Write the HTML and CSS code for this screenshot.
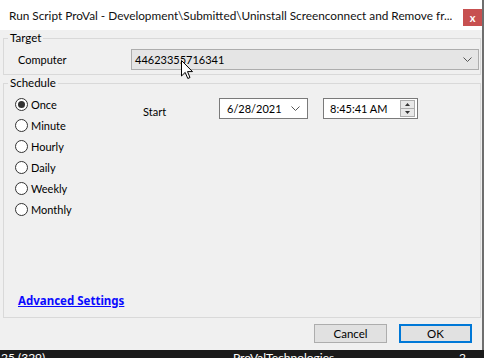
FILE: index.html
```html
<!DOCTYPE html>
<html lang="en">
<head>
    <meta charset="UTF-8">
    <title>Run Script</title>
    <link rel="stylesheet" href="styles.css">
</head>
<body>
    <div class="window">
        <div class="titlebar">
            <span class="title">Run Script ProVal - Development\Submitted\Uninstall Screenconnect and Remove fr...</span>
            <span class="close">x</span>
        </div>

        <fieldset class="group">
            <legend>Target</legend>
            <div class="target-row">
                <span class="field-label">Computer</span>
                <div class="combo">
                    <span>44623355716341</span>
                    <svg class="chevron" width="9" height="5" viewBox="0 0 9 5"><path d="M0.5 0.5 L4.5 4.5 L8.5 0.5" fill="none" stroke="#555" stroke-width="1"/></svg>
                </div>
            </div>
        </fieldset>

        <fieldset class="group">
            <legend>Schedule</legend>
            <div class="schedule-body">
                <div class="schedule-top">
                    <ul class="radios">
                        <li><span class="radio checked"></span>Once</li>
                        <li><span class="radio"></span>Minute</li>
                        <li><span class="radio"></span>Hourly</li>
                        <li><span class="radio"></span>Daily</li>
                        <li><span class="radio"></span>Weekly</li>
                        <li><span class="radio"></span>Monthly</li>
                    </ul>
                    <div class="start-row">
                        <span class="start-label">Start</span>
                        <div class="picker date">
                            <span>6/28/2021</span>
                            <svg class="chevron" width="9" height="5" viewBox="0 0 9 5"><path d="M0.5 0.5 L4.5 4.5 L8.5 0.5" fill="none" stroke="#555" stroke-width="1"/></svg>
                        </div>
                        <div class="picker time">
                            <span>8:45:41 AM</span>
                            <div class="spin">
                                <div class="spin-btn"><svg width="5" height="3" viewBox="0 0 5 3"><path d="M0 3 L2.5 0 L5 3 Z" fill="#333"/></svg></div>
                                <div class="spin-btn"><svg width="5" height="3" viewBox="0 0 5 3"><path d="M0 0 L2.5 3 L5 0 Z" fill="#333"/></svg></div>
                            </div>
                        </div>
                    </div>
                </div>
                <a class="advanced" href="#">Advanced Settings</a>
            </div>
        </fieldset>

        <div class="buttons">
            <button class="btn">Cancel</button>
            <button class="btn primary">OK</button>
        </div>

        <svg class="cursor" width="13" height="20" viewBox="0 0 13 20">
            <path d="M0.5 0.5 L0.5 16 L4.2 12.4 L6.8 18.5 L9 17.5 L6.5 11.6 L11.5 11.6 Z" fill="#fff" stroke="#000" stroke-width="1" stroke-linejoin="round"/>
        </svg>
    </div>

    <div class="taskbar">
        <span class="tb-left">25 (329)</span>
        <span class="tb-mid">ProValTechnologies</span>
        <span class="tb-right">2</span>
    </div>
</body>
</html>
```

FILE: styles.css
```css
/* Global */
body {
    margin: 0;
    width: 484px;
    height: 358px;
    overflow: hidden;
    background: #1a1a1a;
    font-family: 'Lato', 'Liberation Sans', sans-serif;
    font-size: 11px;
    color: #000;
}

/* Dialog window */
.window {
    position: relative;
    height: 350px;
    background: #f0f0f0;
    border-right: 2px solid #6e6e6e;
    box-sizing: border-box;
}

.titlebar {
    position: relative;
    height: 30px;
    background: #ffffff;
    display: flex;
    align-items: center;
    padding-left: 9px;
}

.title {
    font-size: 11.8px;
    color: #111;
    white-space: nowrap;
    overflow: hidden;
    max-width: 452px;
}

.close {
    position: absolute;
    right: 0;
    top: 9px;
    width: 19px;
    height: 17px;
    background: #c75050;
    color: #fff;
    font-size: 11px;
    font-weight: bold;
    display: flex;
    align-items: center;
    justify-content: center;
}

/* Group boxes */
.group {
    margin: 1px 1px 0 3px;
    padding: 0;
    border: 1px solid #d9d9d9;
    min-width: 0;
}

.group legend {
    margin-left: 4px;
    padding: 0 2px;
    line-height: 14px;
    font-size: 11.5px;
}

.target-row {
    display: flex;
    align-items: center;
    padding: 4px 1px 4px 14px;
}

.field-label {
    width: 113px;
}

.combo {
    flex: 1;
    height: 21px;
    box-sizing: border-box;
    background: #e5e5e5;
    border: 1px solid #adadad;
    display: flex;
    align-items: center;
    justify-content: space-between;
    padding: 0 6px 0 3px;
}

/* Schedule */
.schedule-body {
    height: 227px;
    display: flex;
    flex-direction: column;
}

.schedule-top {
    display: flex;
    padding: 4px 0 0 11px;
}

.radios {
    list-style: none;
    margin: 0;
    padding: 0;
    width: 128px;
}

.radios li {
    height: 21px;
    display: flex;
    align-items: center;
}

.radio {
    width: 13px;
    height: 13px;
    box-sizing: border-box;
    border: 1px solid #333;
    border-radius: 50%;
    background: #fff;
    margin-right: 3px;
    display: flex;
    align-items: center;
    justify-content: center;
}

.radio.checked::after {
    content: '';
    width: 7px;
    height: 7px;
    border-radius: 50%;
    background: #333;
}

.start-row {
    display: flex;
    align-items: center;
    margin-top: 4px;
    height: 21px;
}

.start-label {
    width: 76px;
    margin-top: 6px;
}

.picker {
    height: 21px;
    box-sizing: border-box;
    background: #fff;
    border: 1px solid #7a7a7a;
    display: flex;
    align-items: center;
    justify-content: space-between;
}

.picker.date {
    width: 89px;
    padding: 0 7px 0 7px;
    margin-right: 15px;
}

.picker.time {
    width: 95px;
    padding: 0 2px 0 6px;
}

.spin {
    width: 15px;
    height: 17px;
    display: flex;
    flex-direction: column;
    border: 1px solid #adadad;
    box-sizing: border-box;
}

.spin-btn {
    flex: 1;
    background: #e8e8e8;
    display: flex;
    align-items: center;
    justify-content: center;
}

.spin-btn + .spin-btn {
    border-top: 1px solid #adadad;
}

.advanced {
    margin-top: auto;
    margin-left: 14px;
    padding-bottom: 9px;
    color: #0a0aff;
    font-family: 'Noto Sans', sans-serif;
    font-weight: bold;
    font-size: 11.5px;
    text-decoration: underline;
}

/* Buttons */
.buttons {
    display: flex;
    justify-content: flex-end;
    gap: 12px;
    padding: 6px 10px 0 0;
}

.btn {
    width: 73px;
    height: 19px;
    box-sizing: border-box;
    border: 1px solid #adadad;
    background: #e1e1e1;
    font-family: inherit;
    font-size: 11.5px;
    padding: 0;
    line-height: 15px;
}

.btn.primary {
    border: 2px solid #0078d7;
}

/* Mouse pointer over the combo */
.cursor {
    position: absolute;
    left: 181px;
    top: 60px;
}

/* Background behind the dialog */
.taskbar {
    height: 8px;
    position: relative;
    overflow: hidden;
    color: #fff;
    font-size: 12px;
    line-height: 14px;
}

.taskbar span {
    position: absolute;
    top: 1px;
}

.tb-left { left: 1px; }
.tb-mid { left: 233px; }
.tb-right { left: 459px; }
```
